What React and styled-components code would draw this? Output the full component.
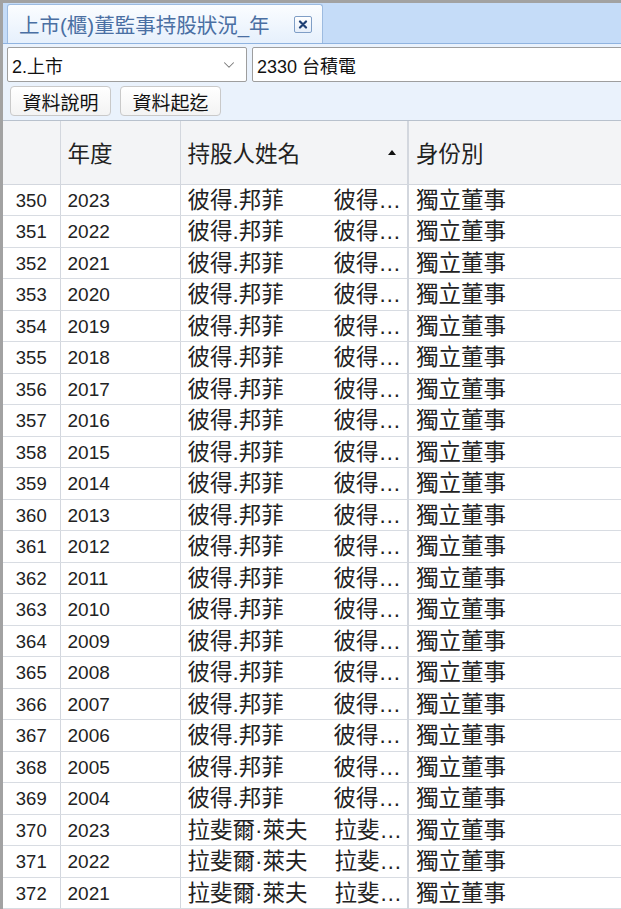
import React from "react";
import styled, { createGlobalStyle } from "styled-components";
import { ChevronDown } from "lucide-react";

const GlobalStyle = createGlobalStyle`
  html, body { margin: 0; padding: 0; background: #ffffff; }
  body { font-family: "Liberation Sans", "Noto Sans CJK TC", sans-serif; }
  * { box-sizing: border-box; }
`;

const Frame = styled.div`
  width: 621px;
  height: 909px;
  overflow: hidden;
  border-left: 3px solid #a2a2a2;
  border-top: 3px solid #a2a2a2;
  background: #ffffff;
  display: flex;
  flex-direction: column;
`;

const TabStrip = styled.div`
  height: 41px;
  flex: none;
  background: #c5dcf8;
  border-bottom: 1px solid #8fb3e0;
  display: flex;
  align-items: flex-end;
  padding-left: 4px;
`;

const Tab = styled.div`
  width: 316px;
  height: 39px;
  border: 1px solid #9dbbe0;
  border-bottom: none;
  border-radius: 3px 3px 0 0;
  background: linear-gradient(#fbfdff, #e6f0fc);
  display: flex;
  align-items: center;
  justify-content: space-between;
  padding: 0 10px 0 11px;
`;

const TabTitle = styled.span`
  font-size: 20.5px;
  color: #4a6fa3;
  white-space: nowrap;
`;

const CloseBox = styled.span`
  width: 18px;
  height: 17px;
  border: 1px solid #7f9ec6;
  border-radius: 2px;
  background: linear-gradient(#ffffff, #e6eef9);
  display: flex;
  align-items: center;
  justify-content: center;
`;

const Toolbar = styled.div`
  flex: none;
  background: #eaf2fc;
  border-bottom: 1px solid #b8c1cd;
  padding: 3px 0 4px 4px;
  display: flex;
  flex-direction: column;
  gap: 4px;
`;

const FieldRow = styled.div`
  display: flex;
  gap: 5px;
  width: 800px;
`;

const SelectBox = styled.div`
  width: 240px;
  height: 35px;
  background: #ffffff;
  border: 1px solid #9e9e9e;
  border-radius: 2px;
  display: flex;
  align-items: center;
  justify-content: space-between;
  padding: 0 8px 0 4px;
  font-size: 18px;
  color: #111;
`;

const TextBox = styled.div`
  width: 500px;
  height: 35px;
  background: #ffffff;
  border: 1px solid #9e9e9e;
  border-radius: 2px;
  display: flex;
  align-items: center;
  padding: 0 4px;
  font-size: 18px;
  color: #111;
`;

const ButtonRow = styled.div`
  display: flex;
  gap: 9px;
  padding-left: 3px;
`;

const Button = styled.button`
  height: 30px;
  width: ${(p) => p.$w}px;
  padding: 0;
  border: 1px solid #c9c9c9;
  border-radius: 4px;
  background: linear-gradient(#ffffff, #f3f3f3);
  font-family: "Liberation Sans", "Noto Sans CJK TC", sans-serif;
  font-size: 19px;
  color: #111;
`;

const Table = styled.table`
  border-collapse: collapse;
  table-layout: fixed;
  width: 640px;
  flex: none;
`;

const HeadCell = styled.th`
  height: 63px;
  padding: 0 ${(p) => (p.$sort ? "11px" : "0")} 0 7px;
  background: #f3f4f6;
  border-right: ${(p) => (p.$thick ? "2px" : "1px")} solid #d3d7de;
  border-bottom: 1px solid #d3d7de;
  font-weight: normal;
  font-size: 22.5px;
  color: #222;
  text-align: left;
`;

const HeadInner = styled.div`
  display: flex;
  align-items: center;
  justify-content: space-between;
`;

const SortArrow = styled.span`
  width: 0;
  height: 0;
  border-left: 4px solid transparent;
  border-right: 4px solid transparent;
  border-bottom: 5px solid #111;
`;

const Row = styled.tr`
  height: 31.5px;
`;

const Cell = styled.td`
  padding: 2px ${(p) => p.$pr || 0}px 0 ${(p) => (p.$center ? 0 : 7)}px;
  border-right: ${(p) => (p.$thick ? "2px" : "1px")} solid #d3d7de;
  border-bottom: 1px solid #d8dce2;
  font-size: ${(p) => (p.$cjk ? 22.5 : p.$center ? 18.5 : 19)}px;
  color: #222;
  text-align: ${(p) => (p.$center ? "center" : "left")};
  white-space: nowrap;
  overflow: hidden;
  text-overflow: ellipsis;
  line-height: 28px;
`;

const Lead = styled.span`
  display: inline-block;
  width: ${(p) => p.$w}px;
`;

const rows = [];
for (let i = 0; i < 20; i++) rows.push({ n: 350 + i, y: 2023 - i, name: "彼得.邦菲", w: 146 });
for (let i = 0; i < 3; i++) rows.push({ n: 370 + i, y: 2023 - i, name: "拉斐爾·萊夫", w: 147 });

export default function App() {
  return (
    <>
      <GlobalStyle />
      <Frame>
        <TabStrip>
          <Tab>
            <TabTitle>上市(櫃)董監事持股狀況_年</TabTitle>
            <CloseBox>
              <svg width="10" height="9" viewBox="0 0 10 9">
                <path d="M2 1.5 L8 7.5 M8 1.5 L2 7.5" stroke="#1e3f73" strokeWidth="2.2" strokeLinecap="round" />
              </svg>
            </CloseBox>
          </Tab>
        </TabStrip>
        <Toolbar>
          <FieldRow>
            <SelectBox>
              <span>2.上市</span>
              <ChevronDown size={18} color="#777" strokeWidth={1.4} />
            </SelectBox>
            <TextBox>2330 台積電</TextBox>
          </FieldRow>
          <ButtonRow>
            <Button $w={101}>資料說明</Button>
            <Button $w={101}>資料起迄</Button>
          </ButtonRow>
        </Toolbar>
        <Table>
          <colgroup>
            <col style={{ width: 57 }} />
            <col style={{ width: 120 }} />
            <col style={{ width: 228 }} />
            <col style={{ width: 235 }} />
          </colgroup>
          <thead>
            <tr>
              <HeadCell />
              <HeadCell>年度</HeadCell>
              <HeadCell $sort $thick>
                <HeadInner>
                  <span>持股人姓名</span>
                  <SortArrow />
                </HeadInner>
              </HeadCell>
              <HeadCell>身份別</HeadCell>
            </tr>
          </thead>
          <tbody>
            {rows.map((r) => (
              <Row key={r.n}>
                <Cell $center>{r.n}</Cell>
                <Cell>{r.y}</Cell>
                <Cell $cjk $thick $pr={1}>
                  <Lead $w={r.w}>{r.name}</Lead>
                  {r.name}
                </Cell>
                <Cell $cjk>獨立董事</Cell>
              </Row>
            ))}
          </tbody>
        </Table>
      </Frame>
    </>
  );
}
